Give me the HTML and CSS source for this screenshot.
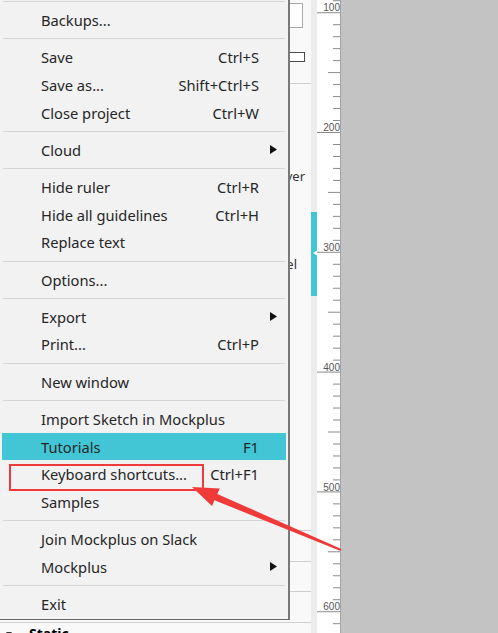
FILE: index.html
```html
<!DOCTYPE html>
<html>
<head>
<meta charset="utf-8">
<link rel="stylesheet" href="styles.css">
</head>
<body>
<div class="app">
  <div class="panel">
    <div class="field"></div>
    <div class="check"></div>
    <div class="rule"></div>
    <div class="plabel hover">Hover</div>
    <div class="plabel lbl">Label</div>
    <div class="rule r1"></div>
    <div class="rule r2"></div>
    <div class="rule r3"></div>
    <div class="rule r4"></div>
    <div class="tree-row">
      <svg class="twisty" width="6" height="6" viewBox="0 0 6 6"><polygon points="0,0 6,0 3,4" fill="#333"/></svg>
      <span class="static">Static</span>
    </div>
  </div>
  <div class="strip">
    <div class="sel">
      <svg width="6" height="84" viewBox="0 0 6 84"><polygon points="2,41 6,38.5 6,43.5" fill="#fff"/></svg>
    </div>
  </div>
  <div class="ruler">
    <svg width="23" height="633" viewBox="0 0 23 633">
      <defs>
        <pattern id="ticks" patternUnits="userSpaceOnUse" x="0" y="12.2" width="23" height="119.8">
          <rect x="0" y="0" width="23" height="1" fill="#8a8a8a"/>
          <rect x="16" y="11.98" width="7" height="1" fill="#8a8a8a"/>
          <rect x="16" y="23.96" width="7" height="1" fill="#8a8a8a"/>
          <rect x="16" y="35.94" width="7" height="1" fill="#8a8a8a"/>
          <rect x="16" y="47.92" width="7" height="1" fill="#8a8a8a"/>
          <rect x="11" y="59.9" width="12" height="1" fill="#8a8a8a"/>
          <rect x="16" y="71.88" width="7" height="1" fill="#8a8a8a"/>
          <rect x="16" y="83.86" width="7" height="1" fill="#8a8a8a"/>
          <rect x="16" y="95.84" width="7" height="1" fill="#8a8a8a"/>
          <rect x="16" y="107.82" width="7" height="1" fill="#8a8a8a"/>
        </pattern>
      </defs>
      <rect x="0" y="0" width="23" height="633" fill="url(#ticks)"/>
      <g class="rlabels" text-anchor="end">
        <text x="23" y="11.3">100</text>
        <text x="23" y="131.1">200</text>
        <text x="23" y="250.9">300</text>
        <text x="23" y="370.7">400</text>
        <text x="23" y="490.5">500</text>
        <text x="23" y="610.3">600</text>
      </g>
    </svg>
  </div>
  <div class="gray"></div>

  <div class="menu">
    <div class="sep"></div>
    <div class="item"><span class="label">Backups...</span><span class="key"></span><span class="sub"></span></div>
    <div class="sep"></div>
    <div class="item"><span class="label">Save</span><span class="key">Ctrl+S</span><span class="sub"></span></div>
    <div class="item"><span class="label">Save as...</span><span class="key">Shift+Ctrl+S</span><span class="sub"></span></div>
    <div class="item"><span class="label">Close project</span><span class="key">Ctrl+W</span><span class="sub"></span></div>
    <div class="sep"></div>
    <div class="item"><span class="label">Cloud</span><span class="key"></span><span class="sub"><svg width="7" height="9" viewBox="0 0 7 9"><polygon points="0,0 7,4.5 0,9" fill="#111"/></svg></span></div>
    <div class="sep"></div>
    <div class="item"><span class="label">Hide ruler</span><span class="key">Ctrl+R</span><span class="sub"></span></div>
    <div class="item"><span class="label">Hide all guidelines</span><span class="key">Ctrl+H</span><span class="sub"></span></div>
    <div class="item"><span class="label">Replace text</span><span class="key"></span><span class="sub"></span></div>
    <div class="sep"></div>
    <div class="item"><span class="label">Options...</span><span class="key"></span><span class="sub"></span></div>
    <div class="sep"></div>
    <div class="item"><span class="label">Export</span><span class="key"></span><span class="sub"><svg width="7" height="9" viewBox="0 0 7 9"><polygon points="0,0 7,4.5 0,9" fill="#111"/></svg></span></div>
    <div class="item"><span class="label">Print...</span><span class="key">Ctrl+P</span><span class="sub"></span></div>
    <div class="sep"></div>
    <div class="item"><span class="label">New window</span><span class="key"></span><span class="sub"></span></div>
    <div class="sep"></div>
    <div class="item"><span class="label">Import Sketch in Mockplus</span><span class="key"></span><span class="sub"></span></div>
    <div class="item active"><span class="label">Tutorials</span><span class="key">F1</span><span class="sub"></span></div>
    <div class="item"><span class="label">Keyboard shortcuts...</span><span class="key">Ctrl+F1</span><span class="sub"></span></div>
    <div class="item"><span class="label">Samples</span><span class="key"></span><span class="sub"></span></div>
    <div class="sep"></div>
    <div class="item"><span class="label">Join Mockplus on Slack</span><span class="key"></span><span class="sub"></span></div>
    <div class="item"><span class="label">Mockplus</span><span class="key"></span><span class="sub"><svg width="7" height="9" viewBox="0 0 7 9"><polygon points="0,0 7,4.5 0,9" fill="#111"/></svg></span></div>
    <div class="sep"></div>
    <div class="item"><span class="label">Exit</span><span class="key"></span><span class="sub"></span></div>
  </div>

  <div class="callout-box"></div>
  <svg class="callout-arrow" width="498" height="633" viewBox="0 0 498 633">
    <polygon points="192,487 219.8,488.4 217.3,493.9 341.4,549.1 340.6,550.9 214.5,500.3 212,506" fill="#f03a3a"/>
  </svg>
</div>
</body>
</html>
```

FILE: styles.css
```css
html, body {
  margin: 0;
  padding: 0;
}

body {
  width: 498px;
  height: 633px;
  overflow: hidden;
  background: #c3c3c3;
  font-family: "Noto Sans", "Open Sans", sans-serif;
}

.app {
  position: relative;
  display: flex;
  width: 498px;
  height: 633px;
  overflow: hidden;
}

/* background properties panel */
.panel {
  width: 311px;
  flex: none;
  background: #f9f9f9;
  display: flex;
  flex-direction: column;
  overflow: hidden;
}

.panel > * {
  flex: none;
}

.field {
  align-self: flex-end;
  width: 150px;
  height: 23px;
  margin: 3px 8px 0 0;
  background: #fff;
  border: 1px solid #a8a8a8;
}

.check {
  align-self: flex-end;
  width: 100px;
  height: 8px;
  margin: 24px 6px 0 0;
  background: #fff;
  border: 1px solid #4a4a4a;
}

.rule {
  height: 1px;
  margin-top: 21px;
  background: #cdcdcd;
}

.plabel {
  align-self: flex-end;
  height: 20px;
  line-height: 20px;
  font-size: 13px;
  color: #333;
}

.hover {
  margin-top: 82px;
  margin-right: 6px;
}

.lbl {
  margin-top: 68px;
  margin-right: 14px;
}

.rule.r1 { margin-top: 256px; }
.rule.r2 { margin-top: 30px; }
.rule.r3 { margin-top: 29px; }
.rule.r4 { margin-top: 30px; }

.tree-row {
  display: flex;
  align-items: flex-start;
  margin-top: 2px;
  height: 20px;
}

.twisty {
  margin: 7px 0 0 6px;
}

.static {
  margin-left: 17px;
  font-size: 14px;
  font-weight: bold;
  line-height: 17px;
  color: #000;
}

/* vertical strip with selection marker */
.strip {
  width: 6px;
  flex: none;
  background: #ececec;
}

.sel {
  margin-top: 212px;
  height: 84px;
  background: #40c5d5;
}

.sel svg {
  display: block;
}

/* ruler */
.ruler {
  width: 23px;
  flex: none;
  background: #fff;
  border-right: 1px solid #a3a3a3;
}

.ruler svg {
  display: block;
}

.rlabels {
  font-family: "Liberation Sans", sans-serif;
  font-size: 10px;
  fill: #555;
}

.gray {
  flex: 1;
  background: #c3c3c3;
}

/* popup menu */
.menu {
  position: absolute;
  left: 0;
  top: -3.25px;
  width: 288px;
  background: #f2f2f2;
  border-right: 2px solid #787878;
  border-bottom: 1px solid #666;
  padding-bottom: 1.5px;
  font-family: "Noto Sans", "Open Sans", sans-serif;
  font-size: 14.7px;
  color: #262626;
}

.sep {
  padding: 4.25px 3px;
}

.sep::before {
  content: "";
  display: block;
  height: 1px;
  background: #d4d4d4;
}

.item {
  display: flex;
  align-items: center;
  height: 27.7px;
  margin: 0 2px;
  padding-left: 39px;
  white-space: nowrap;
}

.item .label {
  flex: 1;
}

.item .key {
  text-align: right;
}

.item .sub {
  width: 27px;
  flex: none;
  display: flex;
  align-items: center;
  padding-left: 11px;
  box-sizing: border-box;
}

.item .sub svg {
  display: block;
}

.item.active {
  background: #42c6d6;
}

/* annotation */
.callout-box {
  position: absolute;
  left: 9px;
  top: 464px;
  width: 191px;
  height: 23px;
  border: 2px solid #f03a3a;
}

.callout-arrow {
  position: absolute;
  left: 0;
  top: 0;
  pointer-events: none;
}
```
